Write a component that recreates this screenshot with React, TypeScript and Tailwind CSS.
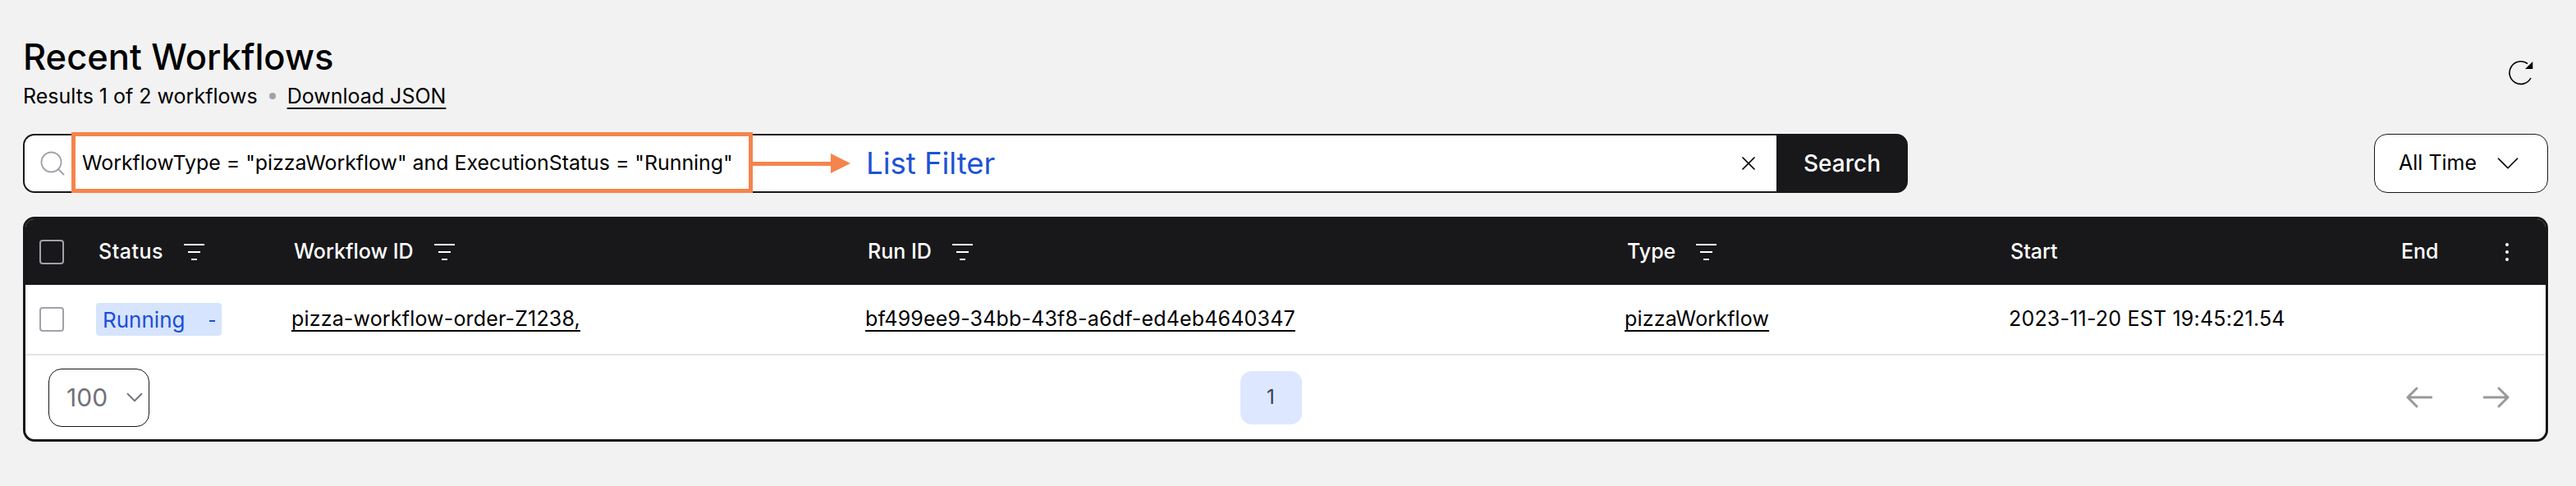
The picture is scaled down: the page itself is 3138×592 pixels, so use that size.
import { ChevronDown, Search, X } from "lucide-react"

function FilterIcon() {
  return (
    <svg width="25" height="20" viewBox="0 0 25 20" className="ml-[25px] shrink-0" stroke="white" strokeWidth="2">
      <path d="M0 1h25M5 10h15M9 19h7" />
    </svg>
  )
}

function RefreshIcon() {
  return (
    <svg width="32" height="32" viewBox="16 12 32 32" className="mt-[30px] mr-[16px] shrink-0">
      <path d="M39 17.5A13.8 13.8 0 1 0 43 35" fill="none" stroke="black" strokeWidth="1.6" />
      <path d="M45.3 15v9H36z" fill="black" />
    </svg>
  )
}

function ArrowIcon({ flip }: { flip?: boolean }) {
  return (
    <svg
      width="32"
      height="26"
      viewBox="0 0 32 26"
      className={flip ? "-scale-x-100" : ""}
      fill="none"
      stroke="#999999"
      strokeWidth="3"
      strokeLinecap="round"
      strokeLinejoin="round"
    >
      <path d="M31 13H2M13 2 2 13l11 11" />
    </svg>
  )
}

function HeaderCell({ label, filter, className = "" }: { label: string; filter?: boolean; className?: string }) {
  return (
    <div className={`flex items-center pl-[3px] text-[25px] font-medium text-white ${className}`}>
      <span>{label}</span>
      {filter && <FilterIcon />}
    </div>
  )
}

function RowLink({ children }: { children: string }) {
  return (
    <a className="text-[25px] tracking-[0.17px] text-black underline decoration-2 underline-offset-[5px]">{children}</a>
  )
}

const columns = "grid grid-cols-[69px_238px_699px_925px_467px_476px_1fr] items-center"

export default function App() {
  return (
    <div className="h-[592px] w-[3138px] overflow-hidden bg-[#f2f2f2] pt-[42px] pr-[34px] pl-[28px] font-['Inter',sans-serif] text-black">
      <div className="flex h-[80px] items-start justify-between">
        <div>
          <h1 className="text-[43.5px] leading-[54px] font-medium">Recent Workflows</h1>
          <div className="mt-[5px] flex items-center text-[25px] leading-[32px]">
            <span>Results 1 of 2 workflows</span>
            <span className="mx-[14px] h-[8px] w-[8px] rounded-full bg-[#a1a1aa]" />
            <a className="underline decoration-2 underline-offset-[5px]">Download JSON</a>
          </div>
        </div>
        <RefreshIcon />
      </div>

      <div className="mt-[41px] flex h-[72px] items-stretch justify-between">
        <div className="relative flex w-[2296px] items-stretch">
          <div className="flex flex-1 items-center rounded-l-[14px] border-2 border-r-0 border-[#18181b] bg-white pr-[20px] pl-[16px]">
            <Search className="h-[36px] w-[36px] text-[#a1a1aa]" strokeWidth={1.25} />
            <span className="ml-[18px] text-[24.9px] whitespace-nowrap">
              WorkflowType = "pizzaWorkflow" and ExecutionStatus = "Running"
            </span>
            <X className="ml-auto h-[28px] w-[28px]" strokeWidth={1.5} />
          </div>
          <div className="flex w-[160px] items-center justify-center rounded-r-[14px] bg-[#18181b] text-[28px] font-medium text-white">
            Search
          </div>
          {/* annotation sits over the search input */}
          <div className="absolute top-[-2px] left-[59px] h-[74px] w-[830px] border-[5px] border-[#f5844c]" />
          <div className="absolute top-[23px] left-[888px] flex items-center">
            <div className="h-[5px] w-[96px] bg-[#f5844c]" />
            <div className="h-0 w-0 border-y-[12px] border-l-[24px] border-y-transparent border-l-[#f5844c]" />
            <span className="ml-[19px] text-[36.5px] leading-[26px] text-[#1d52d4]">List Filter</span>
          </div>
        </div>
        <div className="flex w-[212px] items-center gap-[15px] rounded-[16px] border border-[#18181b] bg-white pl-[29px] text-[25px]">
          All Time
          <ChevronDown className="h-[46px] w-[46px]" strokeWidth={0.9} />
        </div>
      </div>

      <div className="mt-[29px] h-[274px] overflow-hidden rounded-[14px] border-[3px] border-[#18181b] bg-white">
        <div className={`${columns} h-[80px] bg-[#18181b] pl-[17px]`}>
          <div className="h-[30px] w-[30px] rounded-[4px] border-2 border-[#a1a1aa]" />
          <HeaderCell label="Status" filter className="tracking-[0.5px]" />
          <HeaderCell label="Workflow ID" filter />
          <HeaderCell label="Run ID" filter />
          <HeaderCell label="Type" filter />
          <HeaderCell label="Start" />
          <div className="flex items-center justify-between pr-[41px]">
            <HeaderCell label="End" />
            <svg width="12" height="28" viewBox="0 0 12 28" fill="white">
              <circle cx="6" cy="5" r="2" />
              <circle cx="6" cy="14" r="2" />
              <circle cx="6" cy="23" r="2" />
            </svg>
          </div>
        </div>
        <div className={`${columns} h-[86px] border-b-2 border-[#e4e4e7] pl-[17px]`}>
          <div className="h-[30px] w-[30px] rounded-[4px] border-2 border-[#a1a1aa]" />
          <div className="flex h-[40px] w-[153px] items-center justify-between rounded-[4px] bg-[#d6e4fd] pr-[8px] pl-[8px] text-[26px] text-[#1d4ed8]">
            Running
            <span className="mt-[3px] h-[2px] w-[7px] bg-[#1d4ed8]" />
          </div>
          <div>
            <RowLink>pizza-workflow-order-Z1238,</RowLink>
          </div>
          <div>
            <RowLink>bf499ee9-34bb-43f8-a6df-ed4eb4640347</RowLink>
          </div>
          <div>
            <RowLink>pizzaWorkflow</RowLink>
          </div>
          <div className="pl-[1px] text-[25px] tracking-[0.2px]">2023-11-20 EST 19:45:21.54</div>
          <div />
        </div>
        <div className="flex h-[102px] items-center justify-between pr-[44px] pl-[28px]">
          <div className="flex h-[71px] w-[123px] items-center justify-between rounded-[16px] border border-[#18181b] pl-[21px] text-[30px] text-[#71717a]">
            100
            <ChevronDown className="h-[34px] w-[34px]" strokeWidth={1.25} />
          </div>
          <div className="mr-[17px] flex h-[65px] w-[75px] items-center justify-center rounded-[14px] bg-[#dde7ff] text-[24px] text-[#374151]">
            1
          </div>
          <div className="flex items-center gap-[62px]">
            <ArrowIcon />
            <ArrowIcon flip />
          </div>
        </div>
      </div>
    </div>
  )
}
